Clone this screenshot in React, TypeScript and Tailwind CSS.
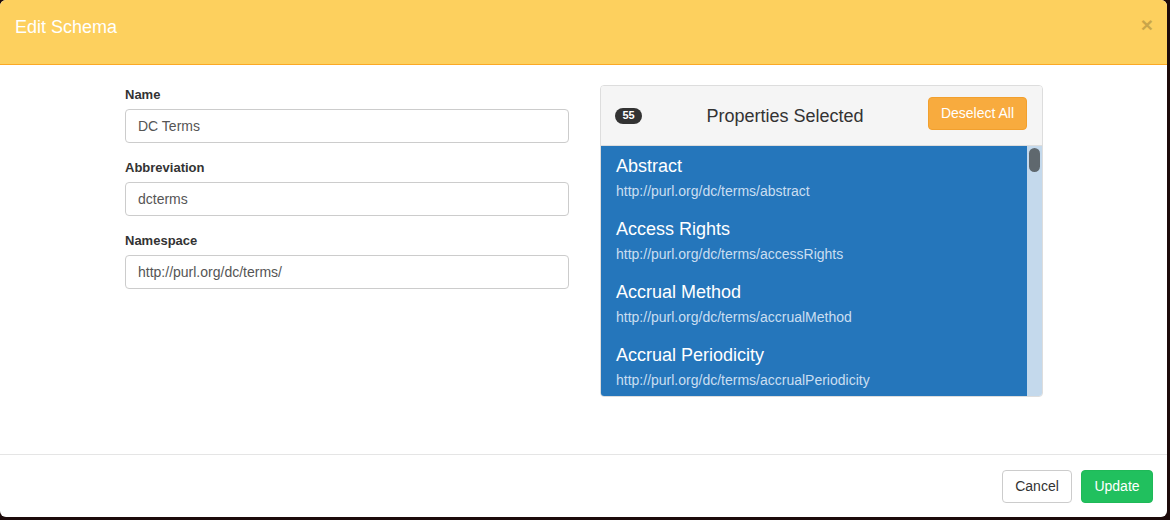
const properties = [
  { name: "Abstract", uri: "http://purl.org/dc/terms/abstract" },
  { name: "Access Rights", uri: "http://purl.org/dc/terms/accessRights" },
  { name: "Accrual Method", uri: "http://purl.org/dc/terms/accrualMethod" },
  { name: "Accrual Periodicity", uri: "http://purl.org/dc/terms/accrualPeriodicity" },
];

function Field({ label, value }: { label: string; value: string }) {
  return (
    <div className="mb-[16px]">
      <label className="mb-[5px] block text-[13px] font-bold leading-[18px] text-[#333]">{label}</label>
      <input
        readOnly
        value={value}
        className="block h-[34px] w-full rounded-[4px] border border-[#ccc] bg-white px-[12px] text-[14px] text-[#555] outline-none"
      />
    </div>
  );
}

export default function App() {
  return (
    <div
      className="h-[520px] w-[1170px] overflow-hidden bg-[#1c0a0a]"
      style={{ fontFamily: '"Liberation Sans", Arial, sans-serif' }}
    >
      <div className="flex h-[517px] w-[1167px] flex-col overflow-hidden rounded-[6px] bg-white">
        {/* header */}
        <div className="flex h-[65px] shrink-0 items-start justify-between border-b border-[#fba925] bg-[#fdd05e] pl-[15px] pr-[14px] pt-[17px]">
          <h4 className="text-[18px] leading-[20px] text-white">Edit Schema</h4>
          <button type="button" className="mt-[-3px] text-[21px] font-bold leading-[21px] text-black opacity-20">
            ×
          </button>
        </div>

        {/* body */}
        <div className="flex h-[389px] shrink-0 gap-[31px] pl-[125px] pt-[20px]">
          <div className="mt-[1px] w-[444px]">
            <Field label="Name" value="DC Terms" />
            <Field label="Abbreviation" value="dcterms" />
            <Field label="Namespace" value="http://purl.org/dc/terms/" />
          </div>

          <div className="flex h-[312px] w-[443px] flex-col overflow-hidden rounded-[4px] border border-[#ddd]">
            <div className="flex h-[60px] shrink-0 items-center border-b border-[#ddd] bg-[#f5f5f5] pl-[14px] pr-[15px]">
              <span className="flex h-[16px] w-[27px] items-center justify-center rounded-full bg-[#333] text-[11px] font-bold text-white">
                55
              </span>
              <span className="flex-1 text-center text-[18px] leading-[20px] text-[#333]">Properties Selected</span>
              <button
                type="button"
                className="mb-[5px] h-[33px] w-[99px] rounded-[4px] border border-[#f2a02e] bg-[#f8ab3e] text-[14px] text-white"
              >
                Deselect All
              </button>
            </div>
            <div className="flex min-h-0 flex-1">
              <div className="flex-1 overflow-hidden bg-[#2576bb]">
                {properties.map((p) => (
                  <div key={p.uri} className="pb-[9px] pl-[15px] pt-[10px]">
                    <div className="text-[18px] leading-[20px] text-white">{p.name}</div>
                    <div className="mt-[6px] text-[14px] leading-[18px] text-[#cadef1]">{p.uri}</div>
                  </div>
                ))}
              </div>
              <div className="w-[15px] shrink-0 bg-[#c4d9ec] px-[2px] pt-[2px]">
                <div className="h-[24px] w-[11px] rounded-full bg-[#5f686e]" />
              </div>
            </div>
          </div>
        </div>

        {/* footer */}
        <div className="flex flex-1 items-start justify-end gap-[9px] border-t border-[#e5e5e5] pr-[14px] pt-[15px]">
          <button
            type="button"
            className="h-[33px] w-[70px] rounded-[4px] border border-[#ccc] bg-white text-[14px] text-[#333]"
          >
            Cancel
          </button>
          <button
            type="button"
            className="h-[33px] w-[72px] rounded-[4px] border border-[#1fb958] bg-[#21c05e] text-[14px] text-white"
          >
            Update
          </button>
        </div>
      </div>
    </div>
  );
}
